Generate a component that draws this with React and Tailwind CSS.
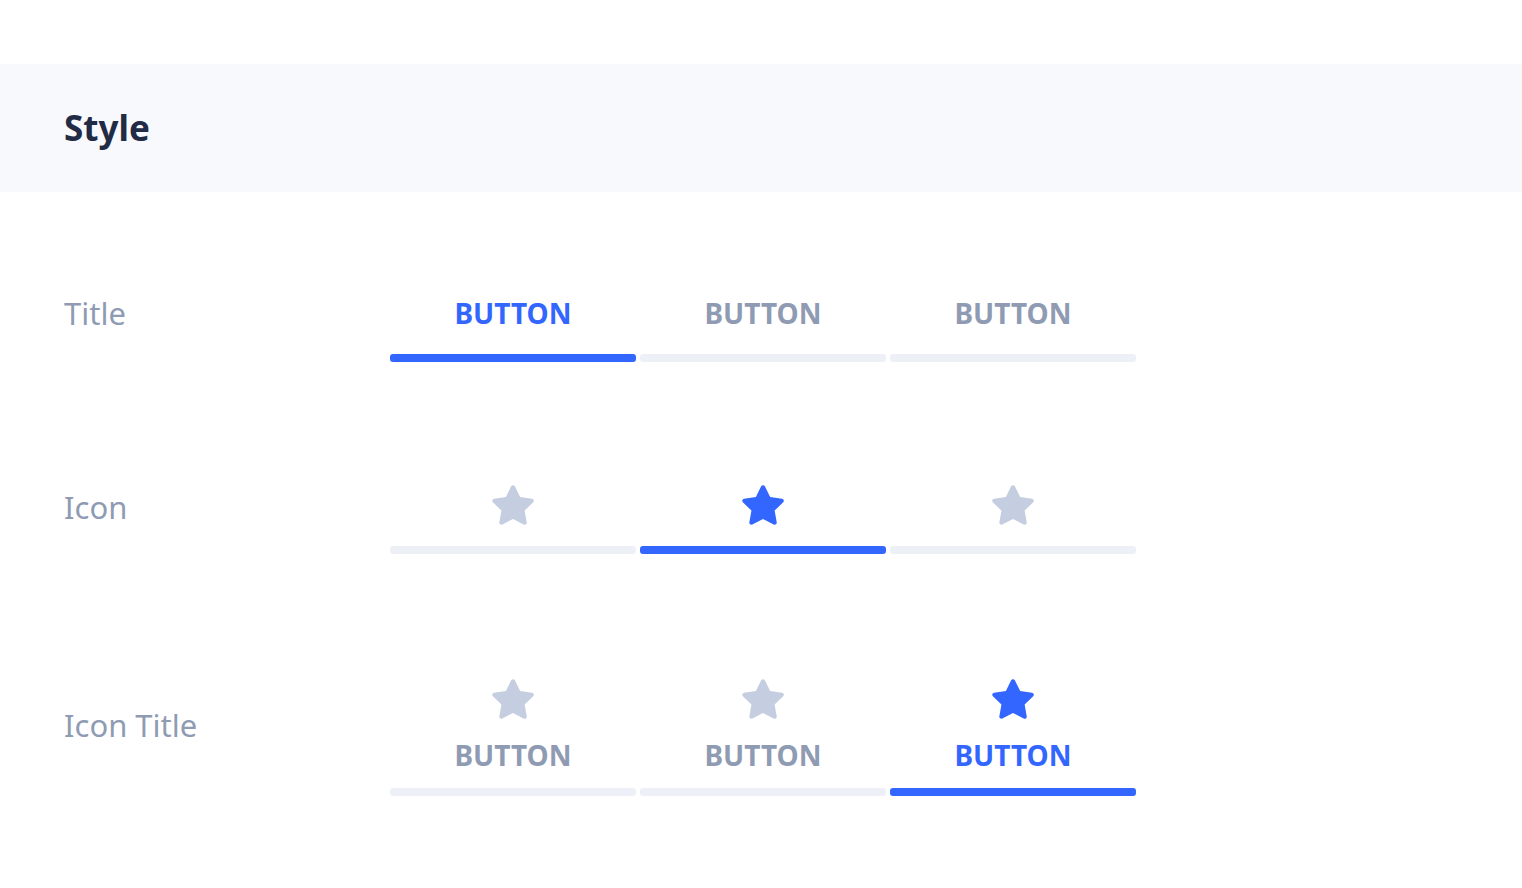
import React from 'react'

const BLUE = 'text-[#3366ff]'
const GREY = 'text-[#8f9bb3]'

function Star({ active }) {
  return (
    <svg width="50" height="50" viewBox="0 0 24 24" className={active ? 'fill-[#3366ff]' : 'fill-[#c5cee0]'}>
      <path d="M17.56 21a1 1 0 0 1-.46-.11L12 18.22l-5.1 2.67a1 1 0 0 1-1.45-1.06l1-5.63-4.12-4a1 1 0 0 1-.25-1 1 1 0 0 1 .81-.68l5.7-.83 2.51-5.130a1 1 0 0 1 1.8 0l2.54 5.12 5.7.83a1 1 0 0 1 .81.68 1 1 0 0 1-.25 1l-4.12 4 1 5.63a1 1 0 0 1-.4 1 1 1 0 0 1-.62.18z" />
    </svg>
  )
}

function Bar({ active }) {
  return <div className={`h-2 w-full rounded-[3px] ${active ? 'bg-[#3366ff]' : 'bg-[#edf1f7]'}`} />
}

function Label({ children, className = '' }) {
  return (
    <div className={`w-[390px] shrink-0 pl-16 text-[31px] leading-[40px] ${GREY} ${className}`}>
      {children}
    </div>
  )
}

export default function App() {
  const idx = [0, 1, 2]
  return (
    <div className="min-h-screen bg-white pt-16 font-['Noto_Sans',sans-serif]">
      {/* header band */}
      <div className="h-32 bg-[#f7f9fc] px-16 flex items-center">
        <h1 className="text-[35px] font-bold text-[#222b45]">Style</h1>
      </div>

      {/* Title row */}
      <div className="flex items-start mt-[101px]">
        <Label>Title</Label>
        <div className="flex gap-1">
          {idx.map((i) => (
            <div key={i} className="w-[246px] flex flex-col items-center">
              <span className={`text-[28px] leading-[40px] font-bold ${i === 0 ? BLUE : GREY}`}>BUTTON</span>
              <div className="mt-[21px] w-full"><Bar active={i === 0} /></div>
            </div>
          ))}
        </div>
      </div>

      {/* Icon row */}
      <div className="flex items-start mt-[119px]">
        <Label className="mt-[6px]">Icon</Label>
        <div className="flex gap-1">
          {idx.map((i) => (
            <div key={i} className="w-[246px] flex flex-col items-center">
              <Star active={i === 1} />
              <div className="mt-[15px] w-full"><Bar active={i === 1} /></div>
            </div>
          ))}
        </div>
      </div>

      {/* Icon Title row */}
      <div className="flex items-start mt-[121px]">
        <Label className="mt-[30px]">Icon Title</Label>
        <div className="flex gap-1">
          {idx.map((i) => (
            <div key={i} className="w-[246px] flex flex-col items-center">
              <Star active={i === 2} />
              <span className={`mt-[10px] text-[28px] leading-[40px] font-bold ${i === 2 ? BLUE : GREY}`}>BUTTON</span>
              <div className="mt-[13px] w-full"><Bar active={i === 2} /></div>
            </div>
          ))}
        </div>
      </div>
    </div>
  )
}
